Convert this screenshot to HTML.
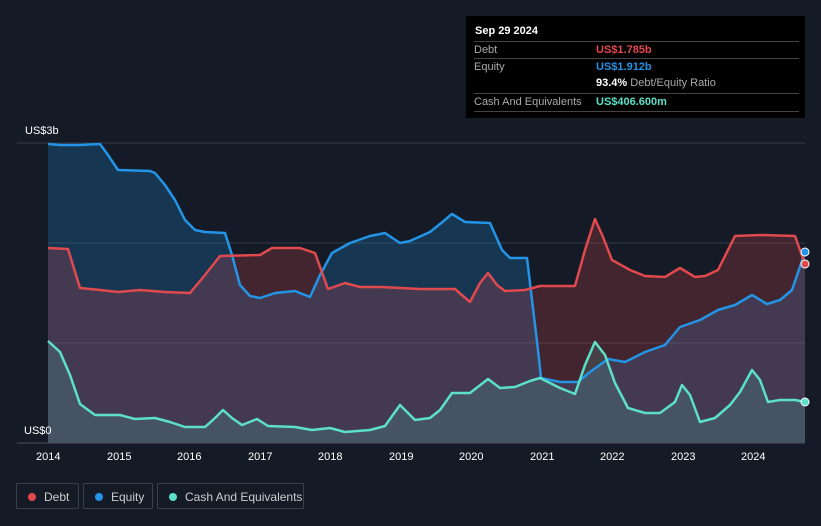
<!DOCTYPE html>
<html><head><style>
body{margin:0;width:821px;height:526px;background:#151b26;font-family:"Liberation Sans",sans-serif;overflow:hidden;position:relative}
.tt{position:absolute;left:466px;top:16px;width:339px;height:102px;background:#000;color:#fff;font-size:11px}
.row{position:absolute;left:8px;right:6px;height:17px;border-top:1px solid #444;}
.row span{position:absolute;top:2px}
.lab{left:0;color:#aaa}
.val{left:122px;font-weight:bold}
.leg{position:absolute;top:483px;height:26px;border:1px solid #3a414d;border-radius:2px;color:#ccc;font-size:12px;line-height:26px;box-sizing:border-box}
.leg i{position:absolute;left:11px;top:9px;width:8px;height:8px;border-radius:50%}
.leg span{position:absolute;left:27px}
.ax{position:absolute;color:#fff;font-size:11px}
</style></head><body>
<svg width="821" height="526" style="position:absolute;left:0;top:0">
<line x1="17" y1="143" x2="805" y2="143" stroke="#333a46"/>
<line x1="48" y1="243" x2="805" y2="243" stroke="#333a46"/>
<line x1="48" y1="343" x2="805" y2="343" stroke="#333a46"/>
<path d="M48,144 L60,145 80,145 100,144 108,155 118,170 150,171 155,173 165,185 175,200 185,220 195,230 205,232 225,233 232,255 240,285 250,296 260,298 275,293 295,291 310,297 320,275 332,253 350,243 370,236 385,233 400,243 410,241 430,232 440,224 452,214 465,222 490,223 502,250 510,258 527,258 532,300 538,350 541,378 560,382 578,382 590,372 608,359 625,362 645,352 665,345 680,327 700,320 718,310 735,305 752,295 767,304 780,300 792,290 805,252 L805,443 L48,443Z" fill="rgba(33,150,243,0.22)"/>
<path d="M48,248 L68,249 80,288 100,290 118,292 140,290 165,292 190,293 205,275 220,256 260,255 272,248 300,248 315,253 328,289 345,283 360,287 380,287 420,289 455,289 470,302 480,283 488,273 497,285 505,291 525,290 540,286 575,286 585,250 595,219 603,237 612,260 630,270 645,276 665,277 680,268 695,277 705,276 718,270 735,236 760,235 795,236 805,264 L805,443 L48,443Z" fill="rgba(229,72,77,0.22)"/>
<path d="M48,341 L60,352 70,375 80,404 95,415 120,415 135,419 155,418 170,422 185,427 205,427 215,418 223,410 232,418 242,425 257,419 268,426 295,427 312,430 330,428 345,432 370,430 385,426 400,405 415,420 430,418 440,410 452,393 470,393 488,379 500,388 515,387 530,381 540,378 560,388 575,394 585,365 595,342 605,355 615,383 628,408 645,413 660,413 675,402 682,385 690,395 700,422 715,418 730,405 740,392 752,370 760,380 768,402 780,400 795,400 805,402 L805,443 L48,443Z" fill="rgba(88,230,200,0.15)"/>
<g fill="none" stroke-width="2.5" stroke-linejoin="round">
<path d="M48,144 L60,145 80,145 100,144 108,155 118,170 150,171 155,173 165,185 175,200 185,220 195,230 205,232 225,233 232,255 240,285 250,296 260,298 275,293 295,291 310,297 320,275 332,253 350,243 370,236 385,233 400,243 410,241 430,232 440,224 452,214 465,222 490,223 502,250 510,258 527,258 532,300 538,350 541,378 560,382 578,382 590,372 608,359 625,362 645,352 665,345 680,327 700,320 718,310 735,305 752,295 767,304 780,300 792,290 805,252" stroke="#2394e6"/>
<path d="M48,248 L68,249 80,288 100,290 118,292 140,290 165,292 190,293 205,275 220,256 260,255 272,248 300,248 315,253 328,289 345,283 360,287 380,287 420,289 455,289 470,302 480,283 488,273 497,285 505,291 525,290 540,286 575,286 585,250 595,219 603,237 612,260 630,270 645,276 665,277 680,268 695,277 705,276 718,270 735,236 760,235 795,236 805,264" stroke="#e0494e"/>
<path d="M48,341 L60,352 70,375 80,404 95,415 120,415 135,419 155,418 170,422 185,427 205,427 215,418 223,410 232,418 242,425 257,419 268,426 295,427 312,430 330,428 345,432 370,430 385,426 400,405 415,420 430,418 440,410 452,393 470,393 488,379 500,388 515,387 530,381 540,378 560,388 575,394 585,365 595,342 605,355 615,383 628,408 645,413 660,413 675,402 682,385 690,395 700,422 715,418 730,405 740,392 752,370 760,380 768,402 780,400 795,400 805,402" stroke="#5ce0c8"/>
</g>
<circle cx="805" cy="252" r="4" fill="#2394e6" stroke="#fff" stroke-width="1"/>
<circle cx="805" cy="264" r="4" fill="#e0494e" stroke="#fff" stroke-width="1"/>
<circle cx="805" cy="402" r="4" fill="#5ce0c8" stroke="#fff" stroke-width="1"/>
<line x1="17" y1="443" x2="805" y2="443" stroke="#4a505c"/>
</svg>
<div class="ax" style="left:25px;top:125px">US$3b</div>
<div class="ax" style="left:24px;top:425px">US$0</div>
<div class="ax" style="left:36px;top:451px">2014</div>
<div class="ax" style="left:107px;top:451px">2015</div>
<div class="ax" style="left:177px;top:451px">2016</div>
<div class="ax" style="left:248px;top:451px">2017</div>
<div class="ax" style="left:318px;top:451px">2018</div>
<div class="ax" style="left:389px;top:451px">2019</div>
<div class="ax" style="left:459px;top:451px">2020</div>
<div class="ax" style="left:530px;top:451px">2021</div>
<div class="ax" style="left:600px;top:451px">2022</div>
<div class="ax" style="left:671px;top:451px">2023</div>
<div class="ax" style="left:741px;top:451px">2024</div>
<div class="tt">
<div style="position:absolute;left:9px;top:9px;font-weight:bold">Sep 29 2024</div>
<div class="row" style="top:25px"><span class="lab">Debt</span><span class="val" style="color:#e5484d">US$1.785b</span></div>
<div class="row" style="top:42px;border-top:1px solid #444"><span class="lab">Equity</span><span class="val" style="color:#2394e6">US$1.912b</span></div>
<div style="position:absolute;left:130px;top:61px;color:#aaa"><b style="color:#fff">93.4%</b> Debt/Equity Ratio</div>
<div class="row" style="top:77px;border-bottom:1px solid #444"><span class="lab">Cash And Equivalents</span><span class="val" style="color:#5ce0c8">US$406.600m</span></div>
</div>
<div class="leg" style="left:16px;width:63px"><i style="background:#e5484d"></i><span>Debt</span></div>
<div class="leg" style="left:83px;width:70px"><i style="background:#2394e6"></i><span>Equity</span></div>
<div class="leg" style="left:157px;width:147px"><i style="background:#5ce0c8"></i><span>Cash And Equivalents</span></div>
</body></html>
